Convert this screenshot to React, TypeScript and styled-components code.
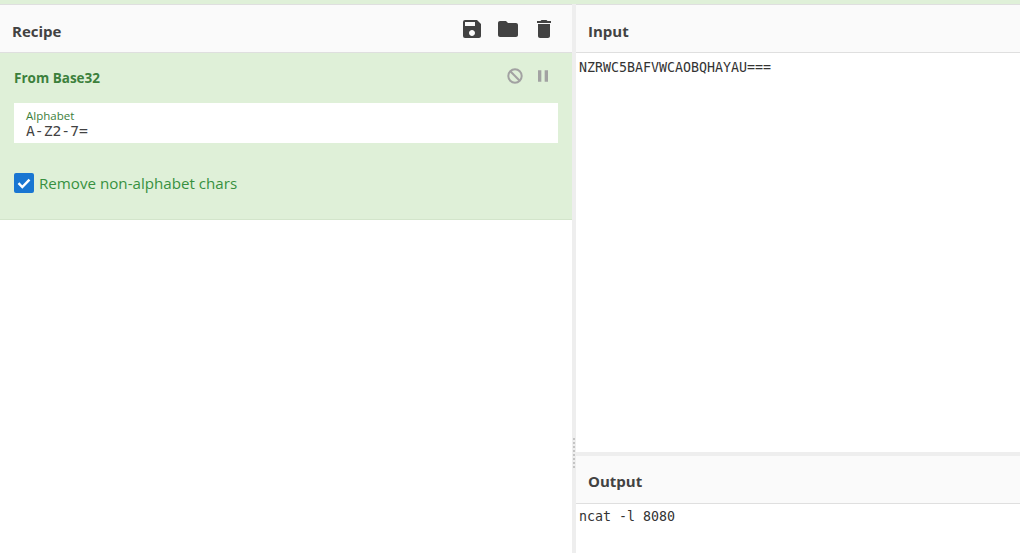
import styled, { createGlobalStyle } from "styled-components";
import { MdSave, MdFolder, MdDelete, MdPause } from "react-icons/md";

const GlobalStyle = createGlobalStyle`
  html, body {
    margin: 0;
    padding: 0;
    height: 100%;
    background: #fff;
    overflow: hidden;
  }
  #root {
    height: 100%;
  }
`;

export default function App() {
  return (
    <>
      <GlobalStyle />
      <Page>
        <TopStrip />
        <Columns>
          <RecipePane>
            <PaneHeader>
              <PaneTitle>Recipe</PaneTitle>
              <HeaderIcons>
                <MdSave size={24} />
                <MdFolder size={24} />
                <MdDelete size={24} />
              </HeaderIcons>
            </PaneHeader>
            <Operation>
              <OpTop>
                <OpName>From Base32</OpName>
                <OpIcons>
                  <svg width="18" height="18" viewBox="0 0 18 18" fill="none" stroke="currentColor" strokeWidth="2">
                    <circle cx="9" cy="9" r="6.7" />
                    <path d="M4.3 4.3l9.4 9.4" />
                  </svg>
                  <MdPause size={20} />
                </OpIcons>
              </OpTop>
              <Field>
                <FieldLabel>Alphabet</FieldLabel>
                <FieldValue>A-Z2-7=</FieldValue>
              </Field>
              <CheckRow>
                <CheckBox>
                  <svg width="20" height="20" viewBox="0 0 20 20" fill="none" stroke="currentColor" strokeWidth="2.4">
                    <path d="M4.5 10.2l3.8 3.8 7.2-7.4" />
                  </svg>
                </CheckBox>
                <CheckLabel>Remove non-alphabet chars</CheckLabel>
              </CheckRow>
            </Operation>
          </RecipePane>
          <Gutter>
            <GutterGrip />
          </Gutter>
          <IoPane>
            <InputBlock>
              <PaneHeader>
                <PaneTitle>Input</PaneTitle>
              </PaneHeader>
              <IoText $top={7}>NZRWC5BAFVWCAOBQHAYAU===</IoText>
            </InputBlock>
            <IoDivider />
            <OutputBlock>
              <OutputHeader>
                <OutputTitle>Output</OutputTitle>
              </OutputHeader>
              <IoText $top={5}>ncat -l 8080</IoText>
            </OutputBlock>
          </IoPane>
        </Columns>
      </Page>
    </>
  );
}

const Page = styled.div`
  display: flex;
  flex-direction: column;
  height: 553px;
  font-family: "Open Sans", "Noto Sans", sans-serif;
`;
const TopStrip = styled.div`
  height: 4px;
  background: #dff0d8;
`;
const Columns = styled.div`
  flex: 1;
  display: flex;
  min-height: 0;
`;
const RecipePane = styled.div`
  width: 572px;
  display: flex;
  flex-direction: column;
`;
const PaneHeader = styled.div`
  box-sizing: border-box;
  height: 49px;
  flex-shrink: 0;
  display: flex;
  align-items: center;
  justify-content: space-between;
  background: #fafafa;
  border-top: 1px solid #dfdfdf;
  border-bottom: 1px solid #dfdfdf;
`;
const OutputHeader = styled(PaneHeader)`
  height: 48px;
  border-top: none;
`;
const PaneTitle = styled.div`
  padding: 4px 0 0 12px;
  font-size: 15px;
  font-weight: 700;
  color: #424242;
`;
const OutputTitle = styled(PaneTitle)`
  padding-top: 2px;
`;
const HeaderIcons = styled.div`
  display: flex;
  gap: 12px;
  padding-right: 16px;
  color: #424242;
  svg {
    display: block;
  }
`;
const Operation = styled.div`
  box-sizing: border-box;
  height: 167px;
  padding: 15px 14px 0;
  background: #dff0d8;
  border-bottom: 1px solid #d3e5cb;
`;
const OpTop = styled.div`
  display: flex;
  align-items: center;
  justify-content: space-between;
  height: 20px;
`;
const OpName = styled.div`
  font-size: 13.5px;
  font-weight: 700;
  color: #3c803c;
`;
const OpIcons = styled.div`
  display: flex;
  align-items: center;
  gap: 9px;
  padding: 0 5px 4px 0;
  color: #a2a2a2;
  svg {
    display: block;
  }
`;
const Field = styled.div`
  box-sizing: border-box;
  height: 40px;
  margin-top: 15px;
  padding: 6px 12px 0;
  background: #fff;
`;
const FieldLabel = styled.div`
  font-size: 11.5px;
  line-height: 13px;
  color: #3c803c;
`;
const FieldValue = styled.div`
  font-family: "DejaVu Sans Mono", "Liberation Mono", monospace;
  font-size: 14.7px;
  line-height: 18px;
  color: #424242;
`;
const CheckRow = styled.div`
  display: flex;
  align-items: center;
  gap: 5px;
  margin-top: 29px;
`;
const CheckBox = styled.div`
  box-sizing: border-box;
  width: 20px;
  height: 20px;
  display: flex;
  align-items: center;
  justify-content: center;
  border-radius: 2px;
  background: #1976d2;
  color: #fff;
`;
const CheckLabel = styled.div`
  padding-top: 1px;
  font-size: 15.15px;
  color: #37903f;
`;
const Gutter = styled.div`
  position: relative;
  width: 4px;
  flex-shrink: 0;
  background: #eeeeee;
`;
const GutterGrip = styled.div`
  position: absolute;
  top: 434px;
  left: 1px;
  width: 2px;
  height: 30px;
  background: repeating-linear-gradient(#c4c4c4 0 2px, transparent 2px 4px);
`;
const IoPane = styled.div`
  flex: 1;
  min-width: 0;
  display: flex;
  flex-direction: column;
`;
const InputBlock = styled.div`
  height: 448px;
  display: flex;
  flex-direction: column;
`;
const IoDivider = styled.div`
  height: 4px;
  background: #eeeeee;
`;
const OutputBlock = styled.div`
  flex: 1;
  display: flex;
  flex-direction: column;
`;
const IoText = styled.div<{ $top: number }>`
  padding: ${(props) => props.$top}px 3px 0;
  font-family: "DejaVu Sans Mono", "Liberation Mono", monospace;
  font-size: 13.3px;
  line-height: 16px;
  color: #333;
`;
